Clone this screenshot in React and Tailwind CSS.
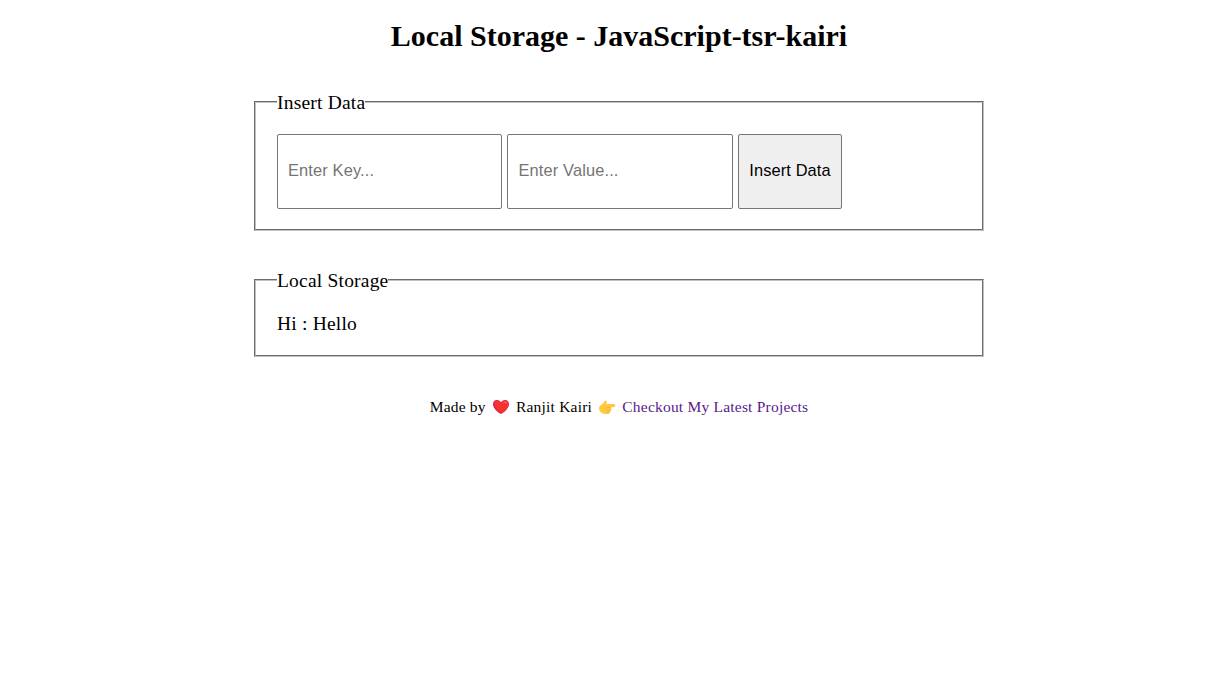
const fieldset = "w-[730px] border-2 [border-style:groove] border-[#c0c0c0] px-[21px] text-[19.5px] tracking-[0.2px]";
const legend = "pt-[2px] leading-[22px]";
const input =
  "h-[75px] rounded-[2px] border border-[#767676] bg-white pr-[10px] pb-[2px] font-['Liberation_Sans',Arial,sans-serif] text-[16.4px] tracking-[0.14px] text-black outline-none placeholder:text-[#757575]";

function Heart() {
  return (
    <svg className="mx-[2px] inline-block h-[16px] w-[18px] align-[-3px]" viewBox="0 0 18 16">
      <path d="M9 15C7 14 1 9.500 1 5.200C1 2.600 2.700 1 5 1C6.900 1 8.300 2 9 3.500C9.700 2 11.200 1 13 1C15.400 1 17 2.700 17 5.200C17 9.500 11 14 9 15Z" fill="#d51b49" />
      <path d="M9.500 14.300C6.500 12.500 2.400 8.500 2.200 5C2.100 2.800 3.500 1.400 5.200 1.400C7 1.400 8.400 2.500 9.100 4.300C9.900 2.300 11.300 1.400 13 1.400C15.200 1.400 16.600 3 16.600 5.200C16.500 8.800 12 12.800 9.500 14.300Z" fill="#f8312f" />
      <path d="M12 3.500Q13.500 2.500 14.700 3.800" fill="none" stroke="#ff625b" strokeWidth="1.200" strokeLinecap="round" />
    </svg>
  );
}

function Hand() {
  return (
    <svg className="mx-[2px] inline-block h-[16px] w-[18px] align-[-3px]" viewBox="0 0 18 16">
      <path d="M1 9Q1.200 6.900 3 6Q5.300 4.700 6.200 2.500Q7.200 1 8.400 1.900Q9.300 2.900 8.500 4.300L8.200 5H16Q17.400 5.200 17.400 6.500Q17.400 7.900 16 8.100L12.800 8.500Q13.900 9.700 12.800 10.800Q13.300 12.100 12.100 13Q12 14.600 10 14.900H6.500Q1.300 14.300 1 9Z" fill="#ffc83d" />
      <path d="M9.300 8.500H12.500M9.300 10.800H12.500M9.300 13H11.700" fill="none" stroke="#edaa32" strokeWidth="0.600" strokeLinecap="round" />
    </svg>
  );
}

export default function App() {
  return (
    <main className="flex min-h-screen flex-col items-center bg-white pl-[8px] font-['Liberation_Serif','Times_New_Roman',serif] text-black">
      <h1 className="mt-[19px] text-[30px] leading-[34px] font-bold">Local Storage - JavaScript-tsr-kairi</h1>
      <fieldset className={`${fieldset} mt-[37px] h-[141px]`}>
        <legend className={legend}>Insert Data</legend>
        <div className="mt-[20px] flex gap-[5px]">
          <input className={`${input} w-[225px] pl-[10px]`} placeholder="Enter Key..." />
          <input className={`${input} w-[226px] pl-[10.5px]`} placeholder="Enter Value..." />
          <button className="h-[75px] w-[104px] rounded-[2px] border border-[#767676] bg-[#efefef] pb-[2px] font-['Liberation_Sans',Arial,sans-serif] text-[16.4px] tracking-[0.12px] whitespace-nowrap">Insert Data</button>
        </div>
      </fieldset>
      <fieldset className={`${fieldset} mt-[37px] h-[89px]`}>
        <legend className={legend}>Local Storage</legend>
        <p className="mt-[21px] leading-[22px]">Hi : Hello</p>
      </fieldset>
      <footer className="mt-[40px] text-[15.5px] leading-[20px] tracking-[0.21px] whitespace-nowrap">
        Made by <Heart /> Ranjit Kairi <Hand /> <a href="#" className="text-[#551a8b]">Checkout My Latest Projects</a>
      </footer>
    </main>
  );
}
